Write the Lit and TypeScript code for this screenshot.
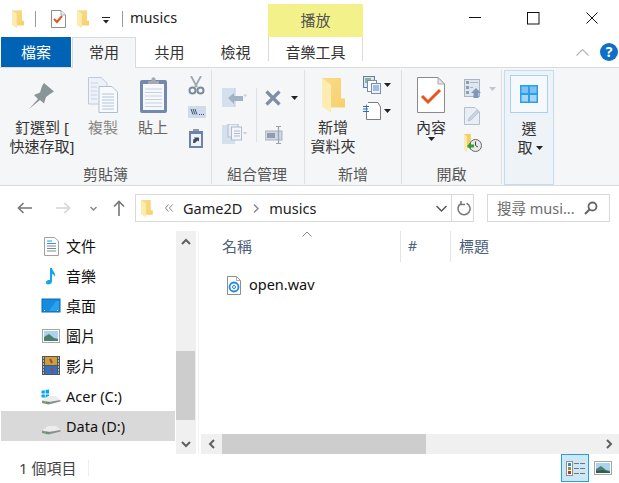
import { LitElement, html, svg, css } from "lit";
import { customElement } from "lit/decorators.js";

const folder = (w: number, h: number) => html`<svg width=${w} height=${h} viewBox="0 0 23 34">
  <defs><linearGradient id="fg" x1="0" y1="0" x2="1" y2="1"><stop offset="0" stop-color="#f8dc8c"/><stop offset="1" stop-color="#f6cf68"/></linearGradient></defs>
  <path d="M0 0H19V20.5H23V29.5H9V34L0 28Z" fill="url(#fg)"/>
  <path d="M0 0L9 7V34L0 28Z" fill="#fdecb2"/>
</svg>`;
const tri = () => html`<svg class="tri" width="7" height="4" viewBox="0 0 7 4"><path d="M0 0H7L3.5 4Z" fill="#222"/></svg>`;
const triG = () => html`<svg class="tri" width="7" height="4" viewBox="0 0 7 4"><path d="M0 0H7L3.5 4Z" fill="#c4c7cc"/></svg>`;
const drive = (win: boolean) => html`<svg width="20" height="20" viewBox="0 0 20 20">
  ${win ? svg`<path d="M.5 4.8 3.8 4.2V7.6H.5ZM4.6 4.1 8 3.5V7.6H4.6ZM.5 8.4H3.8V11.8L.5 11.2ZM4.6 8.4H8V12.5L4.6 11.9Z" fill="#00a4ef"/>` : ""}
  <path d="M7 10H15L19.5 14 7.5 16 1 14.5Z" fill="#ececec"/>
  <path d="M1 14.5 7.5 16 19.5 14V15.5L7.5 18.5 1 17Z" fill="#8d8d8d"/>
  <path d="M5 16.5H8" stroke="#39a845" stroke-width="1.5"/>
</svg>`;
const pic = () => html`<svg width="18" height="14" viewBox="0 0 18 14">
  <rect x=".5" y=".5" width="17" height="13" fill="#fff" stroke="#a5a5a5"/>
  <rect x="2" y="2" width="14" height="10" fill="#a9d3ee"/>
  <path d="M2 8 7 5 12 9 16 10V12H2Z" fill="#4f7e70"/>
  <path d="M2 10 9 9 16 11V12H2Z" fill="#2f5d58"/>
</svg>`;

@customElement("app-root")
export class AppRoot extends LitElement {
  static styles = css`
    :host { display: block; width: 619px; height: 483px; overflow: hidden; background: #fff; color: #222;
      font-family: "Noto Sans", "Noto Sans CJK TC", sans-serif; font-size: 15px; line-height: 19px; }
    svg { display: block; flex: none; }
    .title { display: flex; height: 37px; }
    .qat { width: 268px; display: flex; align-items: center; padding-left: 12px; box-sizing: border-box; }
    .vsep { width: 1px; height: 16px; background: #9a9a9a; flex: none; }
    .qs1 { margin: 0 15px 0 11px; }
    .qi { margin-right: 11px; }
    .qd { margin: 4px 11px 0 12px; }
    .wintitle { font-size: 14.5px; color: #222; padding-bottom: 2px; margin-left: 7px; }
    .ctx { width: 95px; margin-top: 4px; background: #f3f189; text-align: center; color: #555; line-height: 33px; }
    .ctl { display: flex; align-items: flex-start; padding: 12px 0 0 106px; gap: 46px; }
    .tabs { display: flex; height: 30px; align-items: flex-start; padding-left: 1px; }
    .tab { width: 65px; height: 30px; text-align: center; line-height: 30px; color: #333; flex: none; box-sizing: border-box; }
    .file { width: 70px; background: #0163b5; color: #fff; }
    .home { width: 64px; margin: 0 0 -1px 1px; height: 31px; background: #f5f6f7; border: 1px solid #d9dadb; border-bottom: 0; position: relative; z-index: 1; line-height: 29px; }
    .t3 { width: 67px; } .t4 { width: 65px; }
    .tool { width: 95px; height: 24px; line-height: 30px; border: 1px solid #d9dadb; border-width: 0 1px; overflow: visible; }
    .tabr { margin-left: auto; display: flex; align-items: center; height: 30px; padding-right: 1px; gap: 11px; }
    .help { width: 18px; height: 18px; border-radius: 50%; background: #0f6fc6; color: #fff; font-size: 14px; font-weight: 700; text-align: center; line-height: 18px; }
    .ribbon { display: flex; height: 119px; box-sizing: border-box; background: #f5f6f7; border-top: 1px solid #dadbdc; border-bottom: 1px solid #dadbdc; padding: 2px 0 1px; }
    .grp { display: flex; flex-direction: column; box-sizing: border-box; border-right: 1px solid #dfe0e2; flex: none; height: 114px; }
    .g1 { width: 212px; } .g2 { width: 93px; } .g3 { width: 97px; } .g4 { width: 100px; }
    .body { flex: 1; display: flex; min-height: 0; padding-top: 2px; }
    .lbl { height: 20px; line-height: 20px; text-align: center; color: #555; flex: none; }
    .lbl2 { padding-right: 2px; }
    .big { display: flex; flex-direction: column; align-items: center; flex: none; text-align: center; white-space: nowrap; color: #333; }
    .slot { height: 46px; display: flex; align-items: center; justify-content: center; flex: none; }
    .dim { color: #888; }
    .dim2 { color: #666; }
    .w84 { width: 84px; } .w38 { width: 38px; margin-right: 11px; } .w39 { width: 40px; margin-right: 11px; }
    .w56 { width: 56px; } .w58 { width: 58px; margin-right: 2px; }
    .small { display: flex; flex-direction: column; flex: none; }
    .s1 { padding: 4px 0 0 4px; gap: 11px; }
    .s1i { margin-left: 1px; }
    .s2 { padding: 16px 0 0 10px; gap: 17px; }
    .s2b { padding: 18px 0 0 8px; gap: 20px; }
    .s3 { padding: 4px 0 0 2px; gap: 8px; }
    .s4 { padding: 7px 0 0 2px; gap: 9px; }
    .item { display: flex; align-items: center; gap: 3px; }
    .sp4 { width: 4px; } .sp2 { width: 2px; }
    .hsep { width: 1px; height: 54px; background: #dfe0e2; margin: 16px 0 0 8px; flex: none; }
    .sel { margin-left: 2px; width: 50px; height: 115px; box-sizing: border-box; background: #eef3f8; border: 1px solid #c3dcf2; padding: 4px 5px 0; flex: none; display: flex; flex-direction: column; align-items: center; color: #333; }
    .selbox { width: 38px; height: 38px; box-sizing: border-box; background: #f6f9fc; border: 1px solid #a9cff5; display: flex; align-items: center; justify-content: center; flex: none; margin-bottom: 6px; }
    .selt { display: flex; align-items: center; gap: 3px; padding-left: 2px; }
    .nav { display: flex; align-items: flex-start; height: 45px; padding: 8px 0 0 17px; box-sizing: border-box; }
    .n { height: 28px; display: flex; align-items: center; flex: none; }
    .n2 { margin-left: 24px; } .n3 { margin-left: 19px; } .n4 { margin-left: 16px; }
    .addr { margin-left: 10px; width: 339px; height: 28px; box-sizing: border-box; border: 1px solid #d9d9d9; display: flex; align-items: center; padding-left: 5px; font-size: 14.5px; flex: none; }
    .addr .c1 { margin-left: 12px; } .addr .c2 { margin-left: 11px; }
    .addr .t1 { margin-left: 10px; } .addr .t2 { margin-left: 10px; }
    .addr .end { margin-left: auto; display: flex; align-items: center; height: 100%; }
    .addr .bar { width: 1px; background: #d9d9d9; height: 100%; margin: 0 5px 0 4px; }
    .addr .end svg:last-child { margin-right: 1px; }
    .search { margin-left: 13px; width: 123px; height: 28px; box-sizing: border-box; border: 1px solid #d9d9d9; display: flex; align-items: center; padding: 0 11px 0 9px; color: #6d6d6d; flex: none; justify-content: space-between; font-size: 14.5px; white-space: nowrap; }
    .main { display: flex; height: 223px; }
    .side { width: 174px; margin: 0 1px; flex: none; }
    .row { height: 30px; display: flex; align-items: center; padding-left: 40px; gap: 5px; color: #111; }
    .row.on { background: #d9d9d9; }
    .lat { font-size: 14.5px; }
    .vs { width: 20px; background: #f0f0f0; flex: none; display: flex; flex-direction: column; align-items: center; }
    .vb { height: 20px; flex: none; display: flex; align-items: center; justify-content: center; }
    .vgap { height: 100px; flex: none; }
    .vgap2 { height: 14px; flex: none; }
    .vth { width: 19px; height: 69px; background: #cdcdcd; flex: none; margin-right: 1px; }
    .split { width: 5px; flex: none; box-sizing: border-box; border-left: 1px solid transparent; }
    .line { width: 1px; height: 100%; background: #f3f3f3; margin-left: 1px; }
    .content { flex: 1; display: flex; flex-direction: column; min-width: 0; }
    .hdr { display: flex; height: 31px; flex: none; color: #4c607a; }
    .hc { box-sizing: border-box; border-right: 1px solid #e5e5e5; line-height: 30px; position: relative; }
    .h1 { width: 200px; padding-left: 21px; } .h2 { width: 50px; padding-left: 7px; font-size: 14px; } .h3 { border: 0; padding-left: 8px; }
    .sort { position: absolute; left: 101px; top: 0; }
    .frow { display: flex; align-items: center; gap: 8px; height: 30px; margin-top: 8px; padding-left: 26px; color: #111; font-size: 14.5px; }
    .ft { margin-top: -2px; }
    .hs { margin-top: auto; height: 20px; background: #f0f0f0; display: flex; align-items: center; }
    .hl { width: 21px; display: flex; justify-content: center; flex: none; }
    .hth { width: 204px; height: 100%; background: #cdcdcd; flex: none; }
    .hr { margin-left: auto; width: 19px; display: flex; justify-content: center; }
    .status { display: flex; height: 28px; align-items: center; padding-left: 19px; color: #444; font-size: 15px; }
    .st { width: 69px; flex: none; white-space: nowrap; }
    .st1 { width: 1px; height: 16px; background: #eee; }
    .view { margin-left: auto; width: 28px; height: 28px; box-sizing: border-box; background: #cce8f7; border: 1px solid #26a0da; display: flex; align-items: center; justify-content: center; }
    .pv { margin: 0 7px 0 5px; }
  `;

  render() {
    return html`
      <div class="title">
        <div class="qat">
          ${folder(12, 18)}
          <div class="vsep qs1"></div>
          <svg class="qi" width="15" height="18" viewBox="0 0 15 18"><path d="M.5.5H10L14.5 5V17.5H.5Z" fill="#fff" stroke="#8e8e8e"/><path d="M10 .5V5H14.5" fill="#eee" stroke="#aaa"/><path d="M3 9 6 12 11 6" fill="none" stroke="#e8531f" stroke-width="2"/></svg>
          ${folder(12, 18)}
          <svg class="qd" width="10" height="7" viewBox="0 0 10 7"><path d="M1 .5H9" stroke="#222"/><path d="M2 3H8L5 6.5Z" fill="#222"/></svg>
          <div class="vsep"></div>
          <div class="wintitle">musics</div>
        </div>
        <div class="ctx">播放</div>
        <div class="ctl">
          <svg width="12" height="12" viewBox="0 0 12 12"><path d="M0 5.5H12" stroke="#111"/></svg>
          <svg width="13" height="13" viewBox="0 0 13 13"><rect x=".5" y=".5" width="11.5" height="11.5" fill="none" stroke="#111"/></svg>
          <svg width="12" height="12" viewBox="0 0 12 12"><path d="M.5.5 11.5 11.5M11.5.5.5 11.5" stroke="#111"/></svg>
        </div>
      </div>
      <div class="tabs">
        <div class="tab file">檔案</div>
        <div class="tab home">常用</div>
        <div class="tab t3">共用</div>
        <div class="tab t4">檢視</div>
        <div class="tab tool">音樂工具</div>
        <div class="tabr">
          <svg width="13" height="8" viewBox="0 0 13 8"><path d="M.5 7.5 6.5 1.5 12.5 7.5" fill="none" stroke="#b5b5b5" stroke-width="1.2"/></svg>
          <div class="help">?</div>
        </div>
      </div>
      <div class="ribbon">
        <div class="grp g1">
          <div class="body">
            <div class="big w84">
              <div class="slot"><svg width="26" height="27" viewBox="0 0 26 27"><path d="M0 27 9 17 5 13 11 10.5 13 4 15 1 25 9.5 21 12 17 15 15 21.5 11 18Z" fill="#8a9599"/></svg></div>
              <div>釘選到 [</div><div>快速存取]</div>
            </div>
            <div class="big w38">
              <div class="slot"><svg width="30" height="36" viewBox="0 0 30 36">
                <path d="M.5.5H13L19 6V27H.5Z" fill="#eef2f8" stroke="#bccadd"/>
                <path d="M11 9.5H24L29.5 15V35.5H11Z" fill="#f8fafd" stroke="#aebed5"/>
                <path d="M14 17H26M14 20H26M14 23H26M14 26H26M14 29H26M14 32H26" stroke="#b2c4dc"/>
                <path d="M3 6H10M3 10H9M3 14H9M3 18H9M3 22H9" stroke="#c4d1e4"/>
              </svg></div>
              <div class="dim">複製</div>
            </div>
            <div class="big w39">
              <div class="slot"><svg width="27" height="36" viewBox="0 0 27 36">
                <rect x="0" y="3" width="27" height="33" rx="2" fill="#7288ad"/>
                <rect x="3" y="7" width="21" height="26" fill="#f6f8fb"/>
                <path d="M5 12H22M5 15.5H22M5 19H22M5 22.5H22M5 26H22M5 29.5H22" stroke="#c6d2e2"/>
                <path d="M8 7V4H11.5V1.5L13.5 0 15.5 1.5V4H19V7Z" fill="#a4a9b2"/>
              </svg></div>
              <div class="dim2">貼上</div>
            </div>
            <div class="small s1">
              <svg width="17" height="19" viewBox="0 0 17 19"><path d="M3 0 9 11M13 0 7 11" stroke="#9fa6ad" stroke-width="1.8"/><circle cx="4.5" cy="14.5" r="3" fill="none" stroke="#7a8a9c" stroke-width="2"/><circle cx="12.5" cy="14.5" r="3" fill="none" stroke="#7a8a9c" stroke-width="2"/></svg>
              <svg width="18" height="12" viewBox="0 0 18 12"><rect width="18" height="12" fill="#cfdbea"/><path d="M3 3 5 8.5M5 3 7 8.5M7 3 9 8.5" stroke="#44546a"/><path d="M11 8.5h1M13 8.5h1M15 8.5h1" stroke="#44546a"/></svg>
              <svg class="s1i" width="16" height="19" viewBox="0 0 16 19"><rect y="2" width="14" height="17" fill="#6d84a6"/><rect x="2" y="5" width="10" height="12" fill="#eef2f7"/><path d="M4 2V0H10V2Z" fill="#8f98a5"/><path d="M4 14 4.5 10H6L5 8.5H10V12.5L8.5 11.5 6 14Z" fill="#404c5e"/></svg>
            </div>
          </div>
          <div class="lbl">剪貼簿</div>
        </div>
        <div class="grp g2">
          <div class="body">
            <div class="small s2">
              <div class="item"><svg width="26" height="19" viewBox="0 0 26 19"><rect width="13" height="19" fill="#d5e0ef"/><path d="M13 0V19" stroke="#bfcfe4"/><path d="M6 10 12 5V8H21V13H12V16Z" fill="#a3b3c6"/><path d="M21 6.5H25.5L23.2 9.2Z" fill="#d0d4da"/></svg></div>
              <div class="item"><svg width="26" height="20" viewBox="0 0 26 20"><rect y="1" width="13" height="19" fill="#d5e0ef"/><rect x="6" y="0" width="10" height="13" fill="#e8edf4" stroke="#aebccd"/><rect x="9.5" y="3" width="10" height="13" fill="#f2f5f9" stroke="#aebccd"/><path d="M12 7H18M12 9.5H18M12 12H18" stroke="#aebccd"/><path d="M20.5 8H25.5L23 10.8Z" fill="#d0d4da"/></svg></div>
            </div>
            <div class="hsep"></div>
            <div class="small s2b">
              <div class="item"><svg width="16" height="16" viewBox="0 0 16 16"><path d="M1.5 1.5 14.5 14.5M14.5 1.5 1.5 14.5" stroke="#7d8fa8" stroke-width="3.2"/></svg><span class="sp4"></span>${tri()}</div>
              <svg width="18" height="18" viewBox="0 0 18 18"><rect x="0" y="5" width="17" height="9" fill="#cfd6df" stroke="#aab3bf"/><rect x="2" y="7" width="8" height="5" fill="#8e9db1"/><path d="M11 .5H16M13.5.5V17.5M11 17.5H16" stroke="#97a3b3" stroke-width="1.2"/></svg>
            </div>
          </div>
          <div class="lbl lbl2">組合管理</div>
        </div>
        <div class="grp g3">
          <div class="body">
            <div class="big w56">
              <div class="slot">${folder(23, 34)}</div>
              <div>新增</div><div>資料夾</div>
            </div>
            <div class="small s3">
              <div class="item"><svg width="18" height="18" viewBox="0 0 18 18"><rect x=".5" y=".5" width="11" height="11" fill="#dbe7f4" stroke="#5e7fa8"/><rect x="2" y="2" width="6" height="5" fill="#8fb48e"/><rect x="4.5" y="4.5" width="9" height="11" fill="#fff" stroke="#7b8ea8"/><rect x="8.5" y="7.5" width="9" height="10" fill="#eef2f8" stroke="#7b8ea8"/><path d="M10 10H16M10 12H16M10 14H16" stroke="#4e89d0"/></svg>${tri()}</div>
              <div class="item"><svg width="18" height="18" viewBox="0 0 18 18"><path d="M3.5 2.5V17.5H17.5V5L15 .5H5" fill="#fff" stroke="#7d7d7d"/><path d="M0 4.5H6M0 7H5M0 9.5H6" stroke="#1f6fd0"/></svg>${tri()}</div>
            </div>
          </div>
          <div class="lbl">新增</div>
        </div>
        <div class="grp g4">
          <div class="body">
            <div class="big w58">
              <div class="slot"><svg width="28" height="36" viewBox="0 0 28 36"><path d="M.5.5H21L27.5 7V35.5H.5Z" fill="#fff" stroke="#8a8a8a"/><path d="M21 .5V7H27.5Z" fill="#e5e5e5" stroke="#aaa"/><path d="M5 19 11 25 23 13" fill="none" stroke="#e8531f" stroke-width="3"/></svg></div>
              <div>內容</div>${tri()}
            </div>
            <div class="small s4">
              <div class="item"><svg width="17" height="19" viewBox="0 0 17 19"><rect x=".5" y=".5" width="15" height="17" fill="#dfe6ef" stroke="#a9b5c5"/><rect x="2" y="2" width="3" height="3" fill="#8d9db2"/><rect x="2" y="7" width="3" height="3" fill="#8d9db2"/><rect x="2" y="12" width="3" height="3" fill="#8d9db2"/><path d="M6 3.5H14M6 8.5H9" stroke="#a9b5c5"/><path d="M7 14 12 9 17 14H14.5V19H9.5V14Z" fill="#7e98b8"/></svg><span class="sp2"></span>${triG()}</div>
              <svg width="17" height="18" viewBox="0 0 17 18"><path d="M.5.5H11L15.5 5V17.5H.5Z" fill="#e9eef5" stroke="#b4c0d0"/><path d="M4 14 5 11 13 3 15 5 7 13Z" fill="#c9d4e2" stroke="#a8b5c6" stroke-width=".6"/></svg>
              <svg width="18" height="18" viewBox="0 0 18 18"><path d="M0 0H7V14H3V18L0 15Z" fill="#f6cf68"/><path d="M0 0 3 3V18L0 15Z" fill="#fdecb2"/><circle cx="11.5" cy="11.5" r="6" fill="#e8e8e8" stroke="#666"/><path d="M11.5 7.5V11.5L14 13" fill="none" stroke="#444"/><path d="M3 12 7 8V10.5H10V13.5H7V16Z" fill="#2f9e3f"/></svg>
            </div>
          </div>
          <div class="lbl">開啟</div>
        </div>
        <div class="sel">
          <div class="selbox"><svg width="18" height="18" viewBox="0 0 18 18"><rect width="18" height="18" fill="#2f9de8"/><rect x="1.5" y="1.5" width="6.5" height="6.5" fill="#7cc3f3"/><rect x="10" y="1.5" width="6.5" height="6.5" fill="#7cc3f3"/><rect x="1.5" y="10" width="6.5" height="6.5" fill="#a6d6f6"/><rect x="10" y="10" width="6.5" height="6.5" fill="#a6d6f6"/></svg></div>
          <div>選</div>
          <div class="selt">取${tri()}</div>
        </div>
      </div>
      <div class="nav">
        <div class="n"><svg width="15" height="12" viewBox="0 0 15 12"><path d="M15 6H1.5M6.5 1 1.5 6 6.5 11" fill="none" stroke="#777" stroke-width="1.6"/></svg></div>
        <div class="n n2"><svg width="15" height="12" viewBox="0 0 15 12"><path d="M0 6H13.5M8.5 1 13.5 6 8.5 11" fill="none" stroke="#d4d4d4" stroke-width="1.6"/></svg></div>
        <div class="n n3"><svg width="7" height="5" viewBox="0 0 7 5"><path d="M.5 1 3.5 4 6.500 1" fill="none" stroke="#888" stroke-width="1.5"/></svg></div>
        <div class="n n4"><svg width="12" height="16" viewBox="0 0 12 16"><path d="M6 16V2M1 6.5 6 1.5 11 6.5" fill="none" stroke="#777" stroke-width="1.6"/></svg></div>
        <div class="addr">
          ${folder(12, 17)}
          <svg class="c1" width="8" height="8" viewBox="0 0 8 8"><path d="M3.5.5.5 4 3.5 7.5M7.5.5 4.5 4 7.5 7.5" fill="none" stroke="#888"/></svg>
          <span class="t1">Game2D</span>
          <svg class="c2" width="6" height="9" viewBox="0 0 6 9"><path d="M1 .5 5 4.5 1 8.5" fill="none" stroke="#888" stroke-width="1.4"/></svg>
          <span class="t2">musics</span>
          <div class="end">
            <svg width="11" height="7" viewBox="0 0 11 7"><path d="M.5 1 5.5 6 10.5 1" fill="none" stroke="#555" stroke-width="1.4"/></svg>
            <div class="bar"></div>
            <svg width="15" height="15" viewBox="0 0 15 15"><path d="M9.5 2.2A6 6 0 1 1 4 2.5M4 0V3.5H8" fill="none" stroke="#777" stroke-width="1.5"/></svg>
          </div>
        </div>
        <div class="search">
          <span>搜尋 musi...</span>
          <svg width="14" height="14" viewBox="0 0 14 14"><circle cx="8.5" cy="5.5" r="4" fill="none" stroke="#666" stroke-width="1.8"/><path d="M5.5 8.5 1 13" stroke="#666" stroke-width="2.2"/></svg>
        </div>
      </div>
      <div class="main">
        <div class="side">
          <div class="row"><svg width="20" height="20" viewBox="0 0 20 20"><path d="M3.5 1.5H13.500L17.5 5V19.5H3.5Z" fill="#fff" stroke="#a0a0a0"/><path d="M6 5H11M6 7.5H15" stroke="#2a9be0"/><path d="M6 10H15M6 12.5H15M6 15H15" stroke="#7a8a94"/></svg><span>文件</span></div>
          <div class="row"><svg width="20" height="20" viewBox="0 0 20 20"><path d="M9 2H11C11 5 15 6 14 11 13.5 9 12 8 11 8V15.5C11 18 7 19 5.5 18 4 16 6 13.5 9 14Z" fill="#16a3f0"/></svg><span>音樂</span></div>
          <div class="row"><svg width="20" height="20" viewBox="0 0 20 20"><rect x="1" y="3" width="18" height="13" fill="#138ce0" stroke="#0f6aa8"/><path d="M8 15 15 5H18V15Z" fill="#2ba0ec"/><path d="M3 14.5H4M16 14.500H17" stroke="#fff"/></svg><span>桌面</span></div>
          <div class="row"><svg width="20" height="20" viewBox="0 0 20 20"><rect x="1.5" y="3.5" width="17" height="13" fill="#fff" stroke="#a5a5a5"/><rect x="3" y="5" width="14" height="10" fill="#a9d3ee"/><path d="M3 11 8 8 13 12 17 13V15H3Z" fill="#4f7e70"/></svg><span>圖片</span></div>
          <div class="row"><svg width="20" height="20" viewBox="0 0 20 20"><rect x="1" y="0" width="18" height="19" fill="#555"/><rect x="4" y="1" width="12" height="8" fill="#c9a23a"/><rect x="4" y="10" width="12" height="8" fill="#2e72c8"/><path d="M9 3 11 7M10 12 12 16" stroke="#b5402e" stroke-width="2"/><path d="M2 2h1M2 5h1M2 8h1M2 11h1M2 14h1M2 17h1M17 2h1M17 5h1M17 8h1M17 11h1M17 14h1M17 17h1" stroke="#ddd" stroke-width="1.5"/></svg><span>影片</span></div>
          <div class="row"><span>${drive(true)}</span><span class="lat">Acer (C:)</span></div>
          <div class="row on"><span>${drive(false)}</span><span class="lat">Data (D:)</span></div>
        </div>
        <div>
          <div class="vs">
            <div class="vb"><svg width="10" height="7" viewBox="0 0 10 7"><path d="M1 6 5 2 9 6" fill="none" stroke="#606060" stroke-width="2"/></svg></div>
            <div class="vgap"></div>
            <div class="vth"></div>
            <div class="vgap2"></div>
            <div class="vb"><svg width="10" height="7" viewBox="0 0 10 7"><path d="M1 1 5 5 9 1" fill="none" stroke="#606060" stroke-width="2"/></svg></div>
          </div>
        </div>
        <div class="split"><div class="line"></div></div>
        <div class="content">
          <div class="hdr">
            <div class="hc h1">名稱<svg class="sort" width="10" height="6" viewBox="0 0 10 6"><path d="M.5 5.5 5 1 9.5 5.5" fill="none" stroke="#8a8a8a"/></svg></div>
            <div class="hc h2">#</div>
            <div class="hc h3">標題</div>
          </div>
          <div class="frow">
            <svg width="14" height="19" viewBox="0 0 14 19"><path d="M.5.5H9.5L13.5 4.5V18.5H.5Z" fill="#fff" stroke="#8e8e8e"/><path d="M9.5.5V4.5H13.5" fill="none" stroke="#aaa"/><circle cx="7" cy="11" r="4.5" fill="none" stroke="#1e88e5" stroke-width="1.8"/><circle cx="7" cy="11" r="1.5" fill="none" stroke="#1e88e5"/></svg>
            <span class="ft">open.wav</span>
          </div>
          <div class="hs">
            <div class="hl"><svg width="7" height="10" viewBox="0 0 7 10"><path d="M6 1 2 5 6 9" fill="none" stroke="#606060" stroke-width="2"/></svg></div>
            <div class="hth"></div>
            <div class="hr"><svg width="7" height="10" viewBox="0 0 7 10"><path d="M1 1 5 5 1 9" fill="none" stroke="#606060" stroke-width="2"/></svg></div>
          </div>
        </div>
      </div>
      <div class="status">
        <div class="st">1 個項目</div>
        <div class="st1"></div>
        <div class="view"><svg width="19" height="15" viewBox="0 0 19 15"><rect x=".5" y=".5" width="6" height="14" fill="#fff" stroke="#8f8f8f"/><rect x="2" y="2" width="3" height="3" fill="#3a84c9"/><rect x="2" y="6" width="3" height="3" fill="#8f8f3a"/><rect x="2" y="10" width="3" height="3" fill="#b5382a"/><path d="M8 2.5H13M14 2.5H19M8 7.5H13M14 7.5H19M8 12.5H13M14 12.500H19" stroke="#777"/></svg></div>
        <div class="pv">${pic()}</div>
      </div>
    `;
  }
}
